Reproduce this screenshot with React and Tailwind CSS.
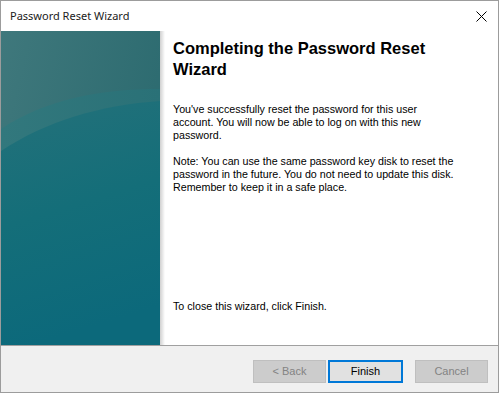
import React from "react";

function PanelArt() {
  return (
    <svg width="159" height="314" viewBox="0 0 159 314" className="block">
      <defs>
        <linearGradient id="bgTop" x1="0" y1="0" x2="1" y2="0.5">
          <stop offset="0" stopColor="#3f787c" />
          <stop offset="1" stopColor="#2b6a6f" />
        </linearGradient>
        <linearGradient id="bgLow" x1="0" y1="0" x2="0.2" y2="1">
          <stop offset="0" stopColor="#24717a" />
          <stop offset="0.5" stopColor="#146e79" />
          <stop offset="1" stopColor="#0c697b" />
        </linearGradient>
        <linearGradient id="band" x1="0" y1="0" x2="1" y2="0">
          <stop offset="0" stopColor="#32787d" />
          <stop offset="1" stopColor="#2a7177" />
        </linearGradient>
      </defs>
      <rect width="159" height="314" fill="url(#bgTop)" />
      <path d="M0 98 C 45 68, 100 58, 159 58 L159 314 L0 314 Z" fill="url(#band)" />
      <path d="M0 120 C 45 90, 100 74, 159 70 L159 314 L0 314 Z" fill="url(#bgLow)" />
    </svg>
  );
}

function Btn({ children, disabled, primary }) {
  if (primary) {
    return (
      <div className="w-[75px] h-[23px] border-2 border-[#0078d7] bg-[#e1e1e1] flex items-center justify-center text-[11px] text-black">
        {children}
      </div>
    );
  }
  return (
    <div
      className={
        "w-[73px] h-[23px] border flex items-center justify-center text-[11px] " +
        (disabled ? "border-[#bfbfbf] bg-[#cccccc] text-[#838383]" : "border-[#adadad] bg-[#e1e1e1] text-black")
      }
    >
      {children}
    </div>
  );
}

export default function App() {
  return (
    <div
      className="w-[499px] h-[393px] flex flex-col border border-[#9c9c9c] bg-white text-black"
      style={{ fontFamily: '"Liberation Sans", Arial, sans-serif' }}
    >
      <div className="h-[30px] flex items-center justify-between pl-[9px] pr-[11px] shrink-0">
        <span className="text-[11px] text-[#1b1b1b]" style={{ fontFamily: '"Noto Sans", sans-serif' }}>
          Password Reset Wizard
        </span>
        <svg width="11" height="11" viewBox="0 0 11 11">
          <path d="M0.5 0.5 L10.5 10.5 M10.5 0.5 L0.5 10.5" stroke="#000" strokeWidth="1" />
        </svg>
      </div>
      <div className="h-[314px] flex shrink-0">
        <div className="w-[159px] shrink-0">
          <PanelArt />
        </div>
        <div className="w-[5px] shrink-0 bg-gradient-to-r from-[#d0d0d0] to-white" />
        <div className="flex-1 flex flex-col pl-[8px] pr-[20px] pt-[7px] pb-[32px]">
          <h1 className="text-[16.5px] leading-[21px] font-bold whitespace-nowrap">
            Completing the Password Reset
            <br />
            Wizard
          </h1>
          <div className="mt-[23px] text-[10.7px] leading-[13px] whitespace-nowrap">
            <p>
              You've successfully reset the password for this user
              <br />
              account. You will now be able to log on with this new
              <br />
              password.
            </p>
            <p className="mt-[13px]">
              Note: You can use the same password key disk to reset the
              <br />
              password in the future. You do not need to update this disk.
              <br />
              Remember to keep it in a safe place.
            </p>
          </div>
          <p className="mt-auto text-[10.7px] leading-[13px]">To close this wizard, click Finish.</p>
        </div>
      </div>
      <div className="flex-1 border-t border-[#a0a0a0] bg-[#f0f0f0] flex items-start justify-end pt-[14px] pr-[10px]">
        <Btn disabled>&lt; Back</Btn>
        <div className="ml-[2px]">
          <Btn primary>Finish</Btn>
        </div>
        <div className="ml-[12px]">
          <Btn disabled>Cancel</Btn>
        </div>
      </div>
    </div>
  );
}
